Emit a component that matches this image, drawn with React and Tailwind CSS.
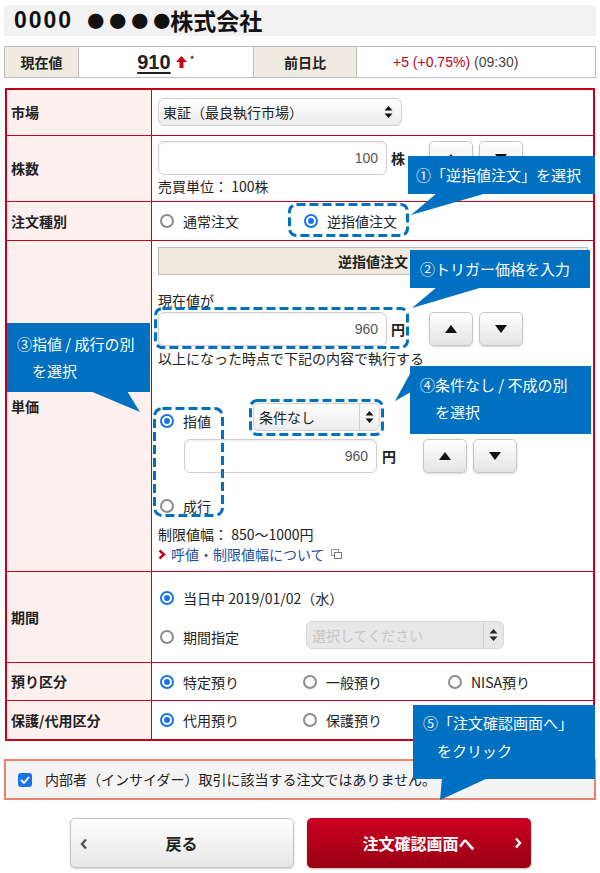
import React from 'react'

// ── small parts ───────────────────────────────────────────────
function Radio({ on }) {
  return on ? (
    <span className="w-[14px] h-[14px] shrink-0 rounded-full border-2 border-[#1a73e8] bg-white flex items-center justify-center">
      <span className="w-[6px] h-[6px] rounded-full bg-[#1a73e8]" />
    </span>
  ) : (
    <span className="w-[14px] h-[14px] shrink-0 rounded-full border-2 border-[#8c8c8c] bg-white" />
  )
}

function Opt({ on, children, className = '' }) {
  return (
    <label className={`flex items-center gap-[9px] text-[14px] leading-[18px] ${className}`}>
      <Radio on={on} />
      <span>{children}</span>
    </label>
  )
}

function UpDown({ color = '#111' }) {
  return (
    <svg width="9" height="14" viewBox="0 0 9 14">
      <polygon points="4.5,1 8.5,5.5 0.5,5.5" fill={color} />
      <polygon points="0.5,8.5 8.5,8.5 4.5,13" fill={color} />
    </svg>
  )
}

function Step({ dir }) {
  return (
    <button className="w-[44px] h-[34px] rounded-[5px] border border-[#c6c6c6] bg-gradient-to-b from-white to-[#e4e4e4] shadow-[0_1px_2px_rgba(0,0,0,.15)] flex items-center justify-center">
      <svg width="12" height="8" viewBox="0 0 12 8">
        {dir === 'up'
          ? <polygon points="6,0 12,8 0,8" fill="#111" />
          : <polygon points="0,0 12,0 6,8" fill="#111" />}
      </svg>
    </button>
  )
}

function NumInput({ value, className = '' }) {
  return (
    <div className={`h-[34px] rounded-[6px] border border-[#cfcfcf] bg-white shadow-[inset_0_1px_2px_rgba(0,0,0,.08)] flex items-center justify-end pr-[8px] font-['Liberation_Sans',sans-serif] text-[14px] text-[#555] ${className}`}>
      {value}
    </div>
  )
}

function Row({ label, h, first, children }) {
  return (
    <div className={`flex ${h} ${first ? '' : 'border-t border-[#c4001a]'}`}>
      <div className="w-[145px] shrink-0 bg-[#fff0f0] border-r border-[#c4001a] flex items-center pl-[4px] text-[14px] font-bold">{label}</div>
      <div className="flex-1 min-w-0">{children}</div>
    </div>
  )
}

// ── page ──────────────────────────────────────────────────────
export default function App() {
  return (
    <div className="relative w-[600px] h-[873px] overflow-hidden bg-white text-[#222] font-['Noto_Sans_CJK_JP',sans-serif]">
      {/* title */}
      <div className="mx-[4px] mt-[5px] h-[31px] bg-[#f2f2f2] pl-[10px] flex items-center leading-none text-[#111]">
        <span className="font-['Liberation_Sans',sans-serif] text-[23px] font-bold tracking-[2px]">0000</span>
        <span className="ml-[14px] flex gap-[5px] text-[17px]">
          <span>●</span><span>●</span><span>●</span><span>●</span>
        </span>
        <span className="text-[23px] font-bold">株式会社</span>
      </div>

      {/* price bar */}
      <div className="mx-[4px] mt-[10px] h-[32px] flex border border-[#bdbdbd] text-[14px]">
        <div className="w-[74px] bg-[#f0ebe0] border-r border-[#bdbdbd] flex items-center justify-center font-bold">現在値</div>
        <div className="w-[175px] border-r border-[#bdbdbd] flex items-center justify-center gap-[3px]">
          <span className="font-['Liberation_Sans',sans-serif] text-[20px] font-bold underline underline-offset-[3px] decoration-[2px]">910</span>
          <svg width="11" height="12" viewBox="0 0 11 12" className="ml-[2px]"><polygon points="5.5,0 11,6 7.5,6 7.5,12 3.5,12 3.5,6 0,6" fill="#c8001e" /></svg>
          <span className="text-[11px] -mt-[6px]">*</span>
        </div>
        <div className="w-[103px] bg-[#f0ebe0] border-r border-[#bdbdbd] flex items-center justify-center font-bold">前日比</div>
        <div className="flex-1 flex items-center pl-[36px] font-['Liberation_Sans',sans-serif] text-[14px]">
          <span className="text-[#c00018]">+5 (+0.75%)</span>
          <span className="ml-[4px] text-[#444]">(09:30)</span>
        </div>
      </div>

      {/* order table */}
      <div className="mx-[5px] mt-[10px] border-2 border-[#c4001a]">
        <Row label="市場" h="h-[45px]" first>
          <div className="pt-[8px] pl-[6px]">
            <div className="w-[244px] h-[28px] rounded-[6px] border border-[#d0d0d0] bg-gradient-to-b from-white to-[#ececec] flex items-center justify-between pl-[4px] pr-[8px] text-[14px]">
              <span>東証（最良執行市場）</span>
              <UpDown />
            </div>
          </div>
        </Row>

        <Row label="株数" h="h-[66px]">
          <div className="pt-[5px] pl-[6px]">
            <div className="flex items-center">
              <NumInput value="100" className="w-[229px]" />
              <span className="ml-[4px] text-[14px] font-bold">株</span>
              <div className="ml-[24px] flex gap-[6px]">
                <Step dir="up" />
                <Step dir="down" />
              </div>
            </div>
            <div className="mt-[2px] text-[14px] leading-[18px]">売買単位： 100株</div>
          </div>
        </Row>

        <Row label="注文種別" h="h-[39px]">
          <div className="h-full flex items-center pl-[8px]">
            <Opt on={false} className="w-[144px]">通常注文</Opt>
            <Opt on>逆指値注文</Opt>
          </div>
        </Row>

        <Row label="単価" h="h-[331px]">
          <div className="pt-[6px] pl-[6px] pr-[5px]">
            <div className="h-[28px] bg-[#efe9de] border border-[#bdbdbd] flex items-center justify-center text-[14px] font-bold">逆指値注文</div>
            <div className="mt-[16px] text-[14px] leading-[18px]">現在値が</div>
            <div className="mt-[3px] flex items-center">
              <NumInput value="960" className="w-[229px]" />
              <span className="ml-[4px] text-[14px] font-bold">円</span>
              <div className="ml-[24px] flex gap-[6px]">
                <Step dir="up" />
                <Step dir="down" />
              </div>
            </div>
            <div className="mt-[3px] text-[14px] leading-[18px]">以上になった時点で下記の内容で執行する</div>

            <div className="mt-[36px] flex items-start">
              <Opt on className="w-[95px] pl-[2px] pt-[9px]">指値</Opt>
              <div className="w-[127px] h-[28px] rounded-[6px] border border-[#d0d0d0] bg-gradient-to-b from-white to-[#ececec] flex items-center text-[14px]">
                <span className="flex-1 pl-[5px]">条件なし</span>
                <span className="h-full w-[20px] border-l border-[#d0d0d0] flex items-center justify-center"><UpDown /></span>
              </div>
            </div>
            <div className="mt-[8px] pl-[26px] flex items-center">
              <NumInput value="960" className="w-[193px]" />
              <span className="ml-[5px] text-[14px] font-bold">円</span>
              <div className="ml-[27px] flex gap-[6px]">
                <Step dir="up" />
                <Step dir="down" />
              </div>
            </div>
            <Opt on={false} className="mt-[24px] pl-[2px]">成行</Opt>
            <div className="mt-[10px] text-[14px] leading-[18px]">制限値幅： 850～1000円</div>
            <div className="mt-[2px] flex items-center text-[14px] leading-[18px] text-[#1d4f9c]">
              <svg width="8" height="11" viewBox="0 0 8 11" className="mr-[5px]"><path d="M1.5 1.5 L6 5.5 L1.5 9.5" stroke="#c8001e" strokeWidth="2.4" fill="none" /></svg>
              <span>呼値・制限値幅について</span>
              <svg width="12" height="11" viewBox="0 0 12 11" className="ml-[6px]">
                <rect x="0.5" y="0.5" width="7" height="6" fill="none" stroke="#999" />
                <rect x="3.5" y="3.5" width="7" height="6" fill="#fff" stroke="#777" />
              </svg>
            </div>
          </div>
        </Row>

        <Row label="期間" h="h-[91px]">
          <div className="pt-[17px] pl-[8px]">
            <Opt on>当日中 2019/01/02（水）</Opt>
            <div className="mt-[14px] flex items-center">
              <Opt on={false} className="w-[146px] pt-[4px]">期間指定</Opt>
              <div className="w-[198px] h-[28px] rounded-[6px] border border-[#d8d8d8] bg-[#e8e8e8] flex items-center text-[14px] text-[#c6c6c6]">
                <span className="flex-1 pl-[5px]">選択してください</span>
                <span className="h-full w-[20px] border-l border-[#d0d0d0] flex items-center justify-center"><UpDown color="#222" /></span>
              </div>
            </div>
          </div>
        </Row>

        <Row label="預り区分" h="h-[38px]">
          <div className="h-full flex items-center pl-[8px]">
            <Opt on className="w-[143px]">特定預り</Opt>
            <Opt on={false} className="w-[145px]">一般預り</Opt>
            <Opt on={false}>NISA預り</Opt>
          </div>
        </Row>

        <Row label="保護/代用区分" h="h-[39px]">
          <div className="h-full flex items-center pl-[8px]">
            <Opt on className="w-[143px]">代用預り</Opt>
            <Opt on={false}>保護預り</Opt>
          </div>
        </Row>
      </div>

      {/* insider check */}
      <div className="mx-[4px] mt-[18px] h-[41px] border-2 border-[#e9836c] bg-[#f4f4f4] flex items-center pl-[12px] text-[14px]">
        <span className="w-[14px] h-[14px] rounded-[3px] bg-[#1a73e8] flex items-center justify-center">
          <svg width="10" height="8" viewBox="0 0 10 8"><path d="M1 4 L4 7 L9 1" stroke="#fff" strokeWidth="1.8" fill="none" /></svg>
        </span>
        <span className="ml-[13px]">内部者（インサイダー）取引に該当する注文ではありません。</span>
      </div>

      {/* buttons */}
      <div className="mt-[18px] flex justify-center gap-[13px]">
        <button className="relative w-[224px] h-[50px] rounded-[5px] border border-[#c4c4c4] bg-gradient-to-b from-white to-[#e6e6e6] text-[16px] font-bold text-[#222] shadow-[0_1px_2px_rgba(0,0,0,.2)]">
          <svg width="8" height="12" viewBox="0 0 8 12" className="absolute left-[9px] top-[19px]"><path d="M6 1.5 L2 6 L6 10.5" stroke="#555" strokeWidth="2.4" fill="none" /></svg>
          戻る
        </button>
        <button className="relative w-[224px] h-[50px] rounded-[5px] bg-gradient-to-b from-[#cc0022] to-[#990014] text-[16px] font-bold text-white shadow-[0_1px_2px_rgba(0,0,0,.3)]">
          注文確認画面へ
          <svg width="8" height="12" viewBox="0 0 8 12" className="absolute right-[9px] top-[19px]"><path d="M2 1.5 L6 6 L2 10.5" stroke="#fff" strokeWidth="2.4" fill="none" /></svg>
        </button>
      </div>

      {/* annotation callouts */}
      <div className="absolute left-[408px] top-[156px] w-[187px] h-[38px] bg-[#0070c0] text-white text-[15px] flex items-center pl-[8px]">①「逆指値注文」を選択</div>
      <div className="absolute left-[410px] top-[250px] w-[180px] h-[38px] bg-[#0070c0] text-white text-[15px] flex items-center pl-[10px]">②トリガー価格を入力</div>
      <div className="absolute left-[7px] top-[323px] w-[143px] h-[69px] bg-[#0070c0] text-white text-[15px] leading-[27px] pt-[7px]">
        <div className="pl-[10px]">③指値 / 成行の別</div>
        <div className="pl-[25px]">を選択</div>
      </div>
      <div className="absolute left-[410px] top-[366px] w-[181px] h-[68px] bg-[#0070c0] text-white text-[15px] leading-[27px] pt-[5px]">
        <div className="pl-[10px]">④条件なし / 不成の別</div>
        <div className="pl-[25px]">を選択</div>
      </div>
      <div className="absolute left-[413px] top-[705px] w-[182px] h-[74px] bg-[#0070c0] text-white text-[15px] leading-[28px] pt-[4px]">
        <div className="pl-[10px]">⑤「注文確認画面へ」</div>
        <div className="pl-[24px]">をクリック</div>
      </div>

      <svg className="absolute left-0 top-0 pointer-events-none" width="600" height="873" viewBox="0 0 600 873">
        <g fill="#0070c0">
          <polygon points="437,193 487,193 411,215" />
          <polygon points="437,287 483,287 412,308" />
          <polygon points="90,391 127,391 140,412" />
          <polygon points="411,372 411,392 395,401" />
          <polygon points="442,778 488,778 440,800" />
        </g>
        <g fill="none" stroke="#0070c0" strokeWidth="3" strokeDasharray="9 4">
          <rect x="289.5" y="204.5" width="118" height="31" rx="7" />
          <rect x="155.5" y="308.5" width="252" height="39" rx="7" />
          <rect x="154.5" y="408.5" width="68" height="107" rx="8" />
          <rect x="250.5" y="400.5" width="132" height="34" rx="7" />
        </g>
      </svg>
    </div>
  )
}
